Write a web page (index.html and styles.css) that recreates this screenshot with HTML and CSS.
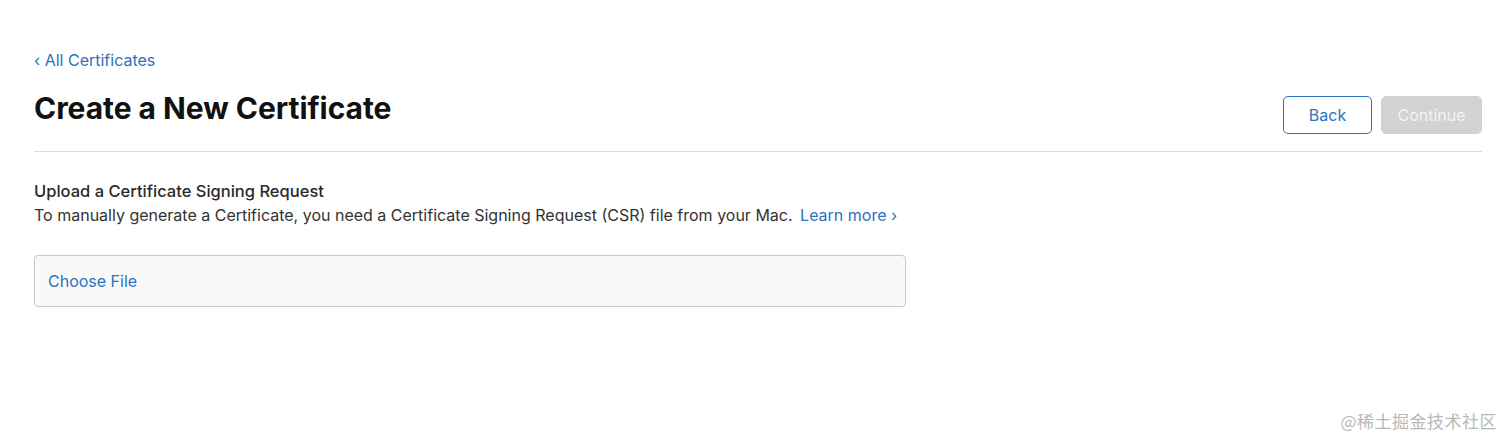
FILE: index.html
```html
<!DOCTYPE html>
<html>
<head>
<meta charset="utf-8">
<link rel="stylesheet" href="styles.css">
</head>
<body>
<div class="page">
  <a class="back-link" href="#"><span class="chev">‹</span> All Certificates</a>
  <div class="header">
    <h1 class="title">Create a New Certificate</h1>
    <div class="actions">
      <button class="btn btn-back">Back</button>
      <button class="btn btn-continue">Continue</button>
    </div>
  </div>
  <div class="section">
    <div class="section-title">Upload a Certificate Signing Request</div>
    <div class="section-desc">To manually generate a Certificate, you need a Certificate Signing Request (CSR) file from your Mac. <a class="learn" href="#">Learn more ›</a></div>
    <div class="file-box"><span class="choose">Choose File</span></div>
  </div>
</div>
<div class="watermark">@稀土掘金技术社区</div>
</body>
</html>
```
FILE: styles.css
```css
html, body {
  margin: 0;
  padding: 0;
  background: #fff;
  font-family: Inter, "Noto Sans", "Liberation Sans", sans-serif;
  color: #1d1d1f;
}
.page {
  padding: 49px 30px 0 34px;
}
.back-link {
  display: inline-block;
  color: #2c72bd;
  text-decoration: none;
  font-size: 16px;
  line-height: 22px;
}
.header {
  display: flex;
  justify-content: space-between;
  align-items: flex-start;
  border-bottom: 1px solid #dcdcdc;
  padding-bottom: 17px;
  margin-top: 17px;
}
.title {
  margin: 0;
  font-size: 30px;
  font-weight: 700;
  line-height: 40px;
  letter-spacing: -0.05px;
  color: #111;
}
.actions {
  display: flex;
  gap: 9px;
  margin-top: 8px;
}
.btn {
  font-family: inherit;
  font-size: 16px;
  height: 38px;
  border-radius: 5px;
  padding: 0;
}
.btn-back {
  width: 89px;
  background: #fff;
  border: 1px solid #2c72bd;
  color: #2c72bd;
}
.btn-continue {
  width: 101px;
  background: #d2d2d2;
  border: 1px solid #d2d2d2;
  color: #f4f4f4;
}
.section {
  padding-top: 27px;
}
.section-title {
  font-size: 16.5px;
  line-height: 24px;
  font-weight: 500;
  color: #2a2a2a;
}
.section-desc {
  font-size: 16px;
  line-height: 24px;
  color: #333;
}
.learn {
  color: #2c72bd;
  text-decoration: none;
  margin-left: 3px;
}
.file-box {
  margin-top: 28px;
  width: 857px;
  height: 50px;
  box-sizing: content-box;
  border: 1px solid #c8c8c8;
  border-radius: 4px;
  background: #f9f9f9;
  display: flex;
  align-items: center;
  padding-left: 13px;
}
.choose {
  color: #2c72bd;
  font-size: 16px;
}
.watermark {
  position: absolute;
  right: 15px;
  top: 408px;
  font-family: "Noto Sans CJK SC", "Noto Sans", sans-serif;
  font-size: 17px;
  color: #b8b8b8;
  letter-spacing: 0.5px;
}
```
